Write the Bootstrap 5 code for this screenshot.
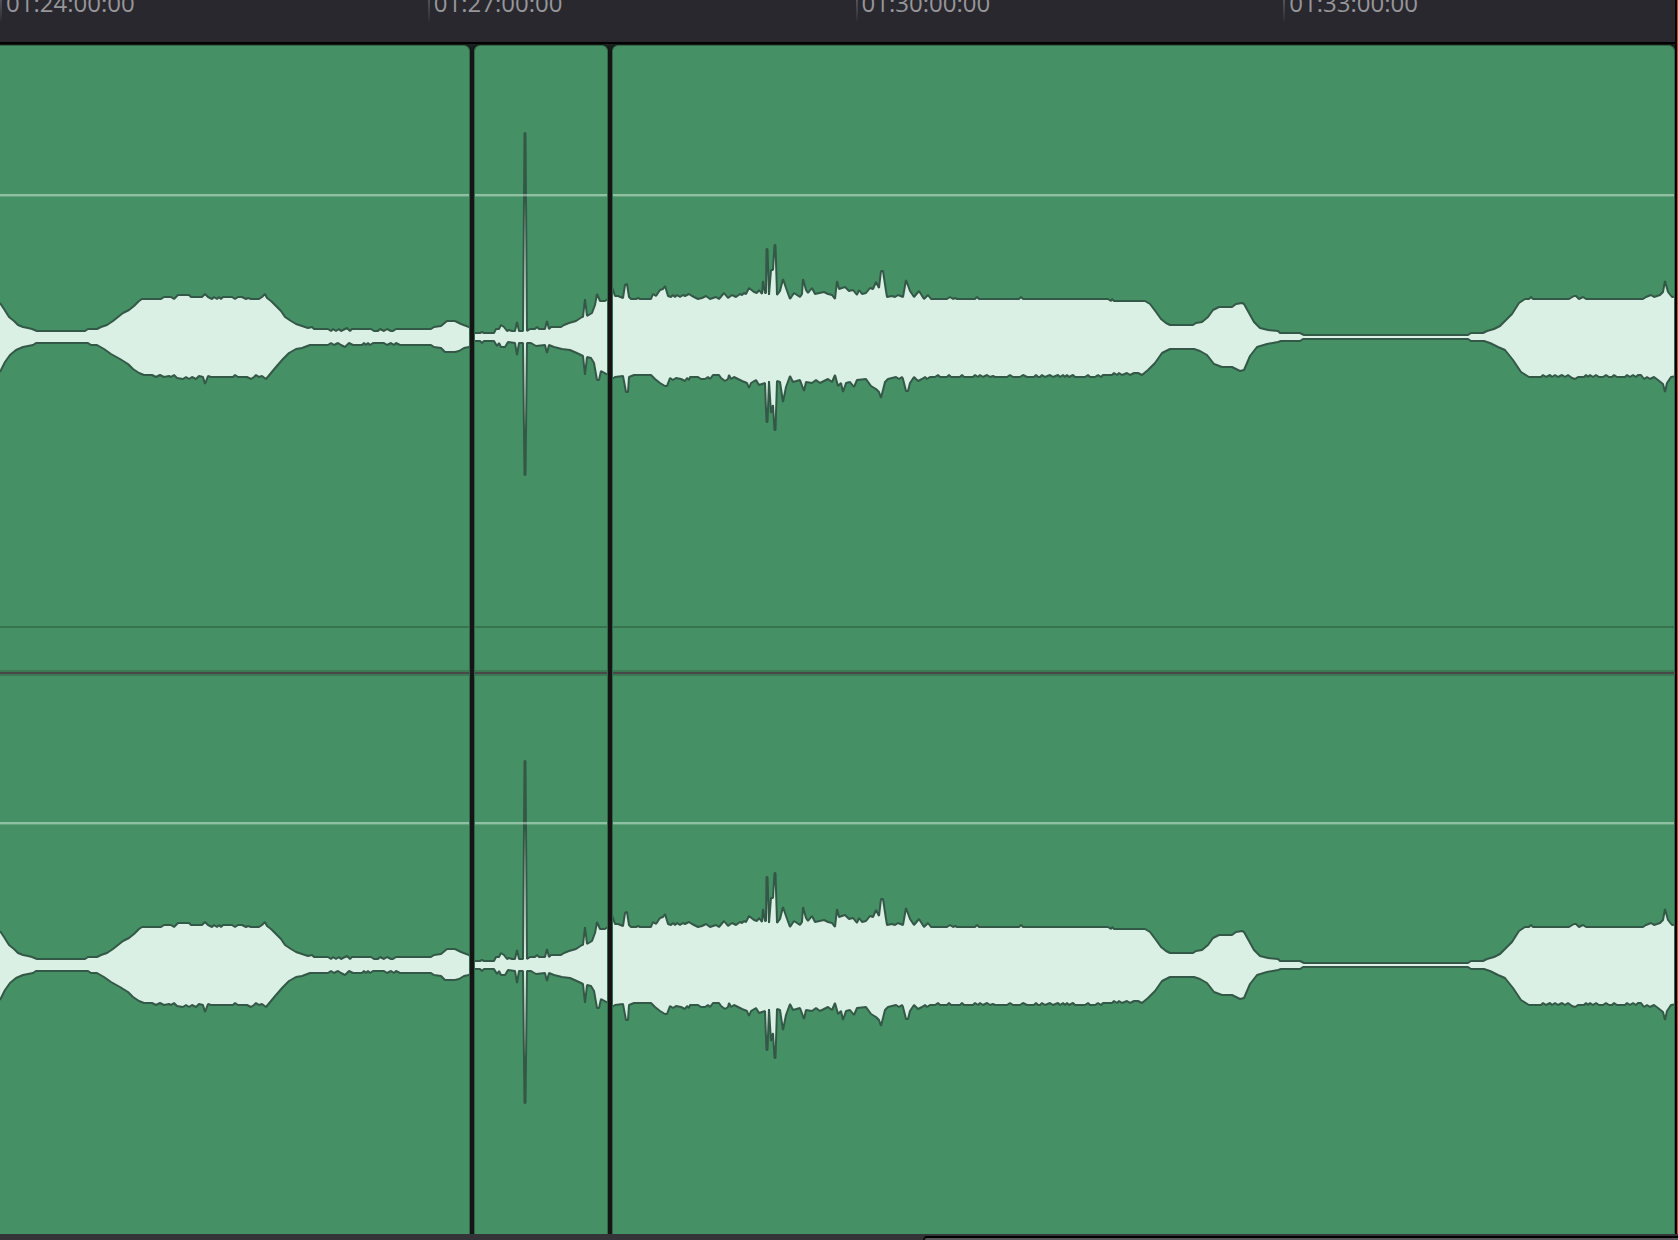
<!DOCTYPE html>
<html lang="en">
<head>
<meta charset="utf-8">
<meta name="viewport" content="width=device-width, initial-scale=1">
<title>Audio timeline</title>
<link href="https://cdn.jsdelivr.net/npm/bootstrap@5.3.0/dist/css/bootstrap.min.css" rel="stylesheet">
<style>
  body { background: #151515; font-family: "Open Sans", "Noto Sans", sans-serif; }
  .ruler { height: 44px; background: #29282e; border-bottom: 2px solid #000; }
  .ruler-mark { flex: 0 0 25.54%; height: 21px; padding-left: 4px;
    border-left: 2px solid; border-image: linear-gradient(#55545a, #2d2c32) 1; }
  .ruler-mark time { display: block; margin-top: -9px; font-size: 24px; line-height: 24px; color: #96969a; }
  .track { padding-top: 1px; gap: 4px; min-height: 0; background: linear-gradient(#1b2222, #151515 8px); }
  .clip { background: #459064; border: 1px solid #34684b; border-bottom: 0; border-radius: 6px 6px 0 0;
    min-width: 0; min-height: 0; box-shadow: 0 0 0 1px #151515; }
  .clip-start { flex: 469 1 0; border-left: 0; border-top-left-radius: 0; }
  .clip-mid { flex: 132 1 0; }
  .clip-end { flex: 1061 1 0; }
  .clip svg { display: block; width: 100%; height: 628px; flex: none; }
  .playhead { width: 3px; border-left: 2px solid #000; background: #d9482f; }
  .scroll-lane { height: 6px; background: #333338; }
  .scroll-thumb { width: 45%; height: 4px; background: #58585c; border-top: 2px solid #000;
    border-left: 2px solid #111; border-top-left-radius: 4px; }
  .wave-fill { fill: #daf0e4; }
  .wave-line { fill: none; stroke: #345847; stroke-width: 2; stroke-linejoin: bevel; vector-effect: non-scaling-stroke; }
</style>
<script src="https://cdn.jsdelivr.net/npm/bootstrap@5.3.0/dist/js/bootstrap.bundle.min.js"></script>
</head>
<body class="vh-100 overflow-hidden d-flex flex-column">
<main class="d-flex flex-grow-1 overflow-hidden">
  <div class="d-flex flex-column flex-grow-1 overflow-hidden">
    <header class="ruler d-flex align-items-start overflow-hidden flex-shrink-0">
      <div class="ruler-mark"><time>01:24:00:00</time></div>
      <div class="ruler-mark"><time>01:27:00:00</time></div>
      <div class="ruler-mark"><time>01:30:00:00</time></div>
      <div class="ruler-mark"><time>01:33:00:00</time></div>
    </header>
    <section class="track d-flex flex-grow-1" aria-label="Audio track">
      <article class="clip clip-start d-flex flex-column overflow-hidden">
        <svg viewBox="0 46 469 628" preserveAspectRatio="none" aria-hidden="true"><use href="#channel"/></svg>
        <svg viewBox="0 46 469 628" preserveAspectRatio="none" aria-hidden="true"><use href="#channel"/><use href="#lane-edge"/></svg>
      </article>
      <article class="clip clip-mid d-flex flex-column overflow-hidden">
        <svg viewBox="475 46 132 628" preserveAspectRatio="none" aria-hidden="true"><use href="#channel"/></svg>
        <svg viewBox="475 46 132 628" preserveAspectRatio="none" aria-hidden="true"><use href="#channel"/><use href="#lane-edge"/></svg>
      </article>
      <article class="clip clip-end d-flex flex-column overflow-hidden">
        <svg viewBox="613 46 1061 628" preserveAspectRatio="none" aria-hidden="true"><use href="#channel"/></svg>
        <svg viewBox="613 46 1061 628" preserveAspectRatio="none" aria-hidden="true"><use href="#channel"/><use href="#lane-edge"/></svg>
      </article>
    </section>
  </div>
  <div class="playhead flex-shrink-0"></div>
</main>
<footer class="scroll-lane d-flex justify-content-end align-items-end flex-shrink-0"><div class="scroll-thumb"></div></footer>

<svg width="0" height="0" class="position-absolute" aria-hidden="true">
  <defs>
    <g id="channel">
      <path class="wave-fill" id="body-fill"/>
      <path class="wave-line" id="upper-line"/>
      <path class="wave-line" id="lower-line"/>
      <path d="M0 194h1678v2H0z" fill="#daf0e4" fill-opacity=".5"/>
      <path d="M0 196h1678v1H0z" fill="#daf0e4" fill-opacity=".2"/>
      <path d="M0 626h1678v2H0z" fill="#37734f"/>
      <path d="M0 670h1678v2H0z" fill="#3c7a56"/>
      <path d="M0 672h1678v2H0z" fill="#494848"/>
    </g>
    <path id="lane-edge" d="M0 46h1678v2H0z" fill="#3c7a56"/>
  </defs>
</svg>
<script>
  // Peak envelopes: x,y pairs for the upper and lower edge of the waveform
  const upper = `0,303 4,309 9,317 14,321 18,325 23,327 28,328 32,329 37,331 85,331 88,329 97,329 101,327 107,325 113,321 118,317 123,313 129,310 134,306 139,301 142,299 161,299 164,297 171,297 174,299 178,295 189,295 191,297 202,297 205,294 208,297 210,298 212,299 214,297 217,299 219,297 221,299 223,297 232,297 235,299 238,297 242,297 246,299 248,298 251,299 259,299 262,297 265,294 267,298 271,301 276,306 281,311 285,317 291,321 296,324 302,326 308,328 312,327 314,329 328,329 331,331 333,329 336,331 339,329 341,331 345,329 347,328 350,331 352,329 371,329 374,331 378,331 380,329 384,331 387,329 391,331 393,331 396,329 431,329 434,327 441,326 447,321 455,321 461,324 469,327
    474,333 480,333 482,332 484,333 494,333 496,329 499,329 501,325 504,327 507,331 509,330 512,331 515,331 517,322 519,331 523,331 524.5,133 525.5,133 527,331 530,329 535,329 537,327 539,329 545,329 547,321 549,329 551,327 561,327 564,325 569,323 576,321 582,317 583,317 585,299 587,316 592,313 595,305 597,294 600,301 605,301 608,299
    612,287 615,296 618,296 623,298 625,285 627,284 629,297 631,299 636,299 638,298 640,299 651,299 653,294 656,296 660,290 663,289 665,286 668,296 671,297 673,295 675,297 677,295 680,297 683,295 685,296 689,294 692,296 698,299 702,298 706,296 710,299 716,297 719,299 724,293 728,298 732,295 736,297 740,294 742,295 744,293 746,294 749,288 754,292 757,293 759,290 762,294 763,281 765,293 766,293 766.5,249 767.5,249 769,295 771,270 773,270 774.5,245 775.5,245 777,295 780,291 783,279 786,288 790,299 794,293 797,295 800,297 802,294 803,279 806,290 808,293 812,288 815,294 824,292 828,294 832,295 835,299 837,281 839,289 845,287 849,291 853,290 857,295 859,290 862,294 866,293 870,288 873,289 876,282 879,288 881,271 883,271 886,291 887,297 892,296 895,297 898,295 903,297 906,280 910,291 914,297 919,291 924,299 928,295 931,299 947,299 950,297 953,299 955,298 957,299 975,299 977,297 979,299 1019,299 1021,297 1023,299 1108,299 1111,301 1112,299 1114,301 1145,301 1150,304 1156,312 1161,319 1166,323 1170,325 1193,325 1196,323 1202,322 1208,317 1213,310 1219,307 1232,307 1236,304 1242,303 1244,304 1249,313 1254,322 1260,328 1268,330 1278,331 1280,333 1300,333 1304,335 1468,335 1471,333 1483,333 1487,331 1494,329 1500,326 1506,320 1512,314 1519,303 1525,299 1529,299 1531,297 1533,299 1569,299 1574,296 1576,296 1579,299 1583,297 1586,299 1643,299 1646,297 1651,295 1654,297 1660,295 1663,292 1665,281 1668,292 1672,297 1678,296`;
  const lower = `0,372 5,362 10,355 16,350 23,347 33,345 36,343 88,343 91,345 97,345 104,349 111,354 120,359 128,364 133,369 139,373 144,375 152,375 156,377 160,375 164,377 169,376 171,377 174,375 177,378 183,379 186,377 189,379 192,377 196,379 199,376 203,377 205,384 208,376 211,377 233,377 235,375 238,377 247,377 251,379 254,377 256,375 259,377 262,376 266,379 271,373 276,367 283,359 289,353 296,349 302,348 310,345 328,345 331,343 334,345 338,343 341,345 345,347 349,343 353,345 362,345 364,343 366,345 368,343 370,345 373,343 384,343 387,345 391,343 394,345 396,343 400,345 431,345 434,347 441,348 445,352 455,352 459,351 464,348 469,347
    474,341 480,341 482,343 484,341 494,341 497,346 499,343 501,347 505,347 508,342 515,343 517,355 519,343 523,343 524.5,475 525.5,475 527,343 531,343 536,346 545,345 547,353 549,345 554,347 562,349 570,350 579,354 583,356 585,375 587,357 591,358 594,363 597,380 599,380 601,371 608,375
    612,379 615,377 623,376 626,392 628,392 629,377 634,375 651,375 655,379 660,383 665,386 667,386 670,378 673,380 676,378 681,379 685,381 687,378 689,380 690,377 698,377 701,379 705,379 708,377 710,379 713,375 719,375 721,378 725,381 728,379 729,375 731,379 734,377 742,381 747,383 749,388 751,383 756,380 759,385 765,383 766.5,422 767.5,422 769,381 771,413 773,405 774.5,430 775.5,430 777,381 780,382 783,402 786,387 790,376 793,382 800,380 804,391 806,382 812,383 816,380 820,383 828,379 832,382 835,375 838,386 841,383 843,392 846,383 850,382 854,387 857,380 866,379 871,386 876,389 879,392 881,398 885,382 888,379 896,377 899,379 902,377 903,379 906,391 908,391 910,383 914,377 918,381 922,379 925,377 927,379 930,377 935,377 938,375 940,377 947,377 949,375 951,377 960,377 962,375 964,377 973,377 975,375 978,377 980,375 983,377 987,375 990,377 993,376 995,377 1007,377 1010,375 1013,377 1020,377 1023,375 1027,377 1034,377 1036,375 1038,377 1040,377 1042,375 1045,377 1050,375 1053,377 1058,375 1060,377 1063,375 1065,377 1067,375 1069,377 1073,375 1075,377 1085,377 1088,375 1090,377 1095,377 1098,375 1101,377 1103,375 1112,375 1114,373 1117,375 1119,373 1122,375 1127,373 1130,375 1134,373 1138,373 1142,375 1148,370 1155,363 1162,353 1170,349 1194,349 1200,351 1207,355 1214,364 1222,367 1232,367 1240,371 1244,370 1247,363 1250,356 1257,347 1267,344 1278,342 1281,341 1300,341 1303,339 1468,339 1471,341 1484,341 1490,343 1498,347 1505,350 1513,360 1521,372 1529,377 1541,377 1543,375 1546,377 1550,375 1552,377 1555,375 1558,377 1562,375 1565,377 1568,375 1572,378 1575,379 1578,377 1584,377 1586,375 1588,377 1590,375 1593,377 1596,375 1599,377 1603,377 1606,375 1609,377 1612,377 1614,375 1617,377 1625,377 1627,375 1630,377 1633,375 1636,377 1638,375 1641,375 1644,379 1647,377 1650,379 1654,377 1658,380 1663,384 1665,392 1667,383 1671,377 1678,376`;
  const low = lower.trim().split(/\s+/);
  document.getElementById('upper-line').setAttribute('d', 'M' + upper);
  document.getElementById('lower-line').setAttribute('d', 'M' + lower);
  document.getElementById('body-fill').setAttribute('d', 'M' + upper + ' L' + low.reverse().join(' ') + 'Z');
</script>
</body>
</html>
